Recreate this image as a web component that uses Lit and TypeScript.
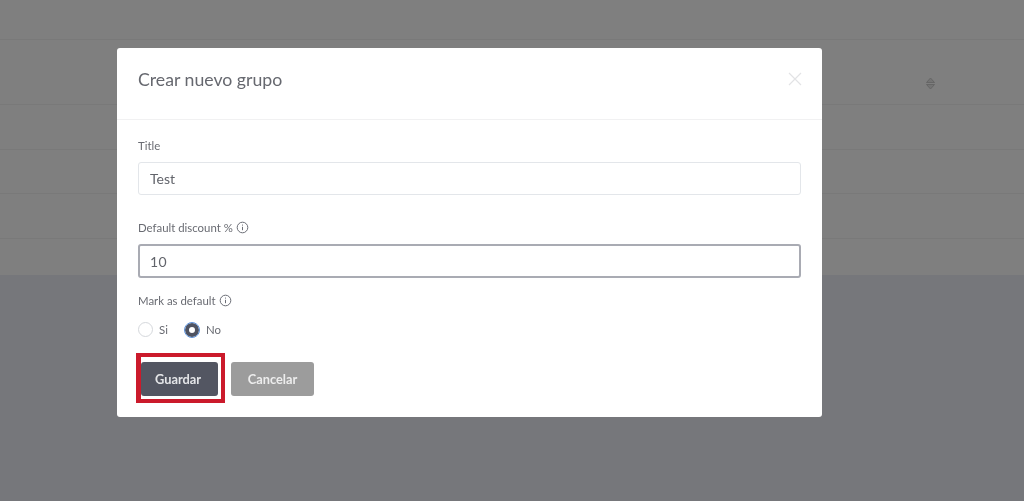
import { LitElement, html, css, svg } from "lit";
import { customElement } from "lit/decorators.js";

const info = svg`<svg class="info" width="13" height="13" viewBox="0 0 13 13" fill="none" stroke="#6b6e76" stroke-width="1"><circle cx="6.5" cy="6.5" r="5.3"/><path d="M6.5 5.8v3.4M6.5 3.6v1"/></svg>`;

@customElement("app-root")
export class AppRoot extends LitElement {
  static styles = css`
    :host { display: block; height: 501px; overflow: hidden; position: relative; background: #76777b; font-family: Lato, "Liberation Sans", sans-serif; filter: blur(.6px); }
    .table { background: #7f7f7f; height: 275px; display: flex; flex-direction: column; }
    .row { border-bottom: 1px solid #797979; box-sizing: border-box; display: flex; align-items: center; justify-content: flex-end; padding-right: 88px; }
    .table .row:last-child { border-bottom: 0; }
    .r0 { height: 40px; } .r1 { height: 65px; } .r2 { height: 45px; } .r3 { height: 44px; } .r4 { height: 45px; } .r5 { height: 36px; }
    .sort { margin-top: 22px; }
    .modal { position: absolute; left: 117px; top: 48px; width: 705px; height: 369px; background: #fff; border-radius: 3px; box-sizing: border-box; display: flex; flex-direction: column; }
    header { height: 72px; box-sizing: border-box; border-bottom: 1px solid #f1f1f2; padding: 20px 20px 0 21px; display: flex; justify-content: space-between; }
    h2 { margin: 0; font-size: 17.7px; line-height: 24px; font-weight: 400; color: #66686f; }
    .close { margin: 4px 0 0; }
    .body { padding: 18px 21px 0; display: flex; flex-direction: column; }
    label { display: flex; align-items: center; gap: 3px; font-size: 11.4px; line-height: 15px; color: #696b72; }
    .input { box-sizing: border-box; height: 33px; margin-top: 9px; border: 1px solid #e3e6ea; border-radius: 3px; padding: 0 11px; font-size: 14px; line-height: 32px; color: #62646b; }
    .input.focus { height: 34px; margin-top: 9px; border: 2px solid #a9abb3; line-height: 31px; padding: 0 10px; letter-spacing: .3px; }
    .mt1 { margin-top: 25px; }
    .mt2 { margin-top: 15px; }
    .radios { display: flex; align-items: center; margin-top: 14px; font-size: 11.4px; color: #696b72; height: 15px; }
    .radio { display: flex; align-items: center; gap: 6px; margin-right: 17px; }
    .radio + .radio { gap: 7px; }
    .dot { box-sizing: border-box; width: 15px; height: 15px; border-radius: 50%; border: 1px solid #d5d8dc; background: #fff; }
    .dot.on { border: 4px solid #4f5361; outline: 1px solid #5a8fd8; width: 14px; height: 14px; }
    .actions { display: flex; gap: 13px; margin: 25px 0 0 3px; position: relative; }
    button { height: 34px; box-sizing: border-box; border: 0; border-radius: 3px; font: 700 12.8px Lato, "Liberation Sans", sans-serif; padding: 0; }
    .save { width: 77px; background: #535662; color: #e4e5e8; padding-right: 3px; }
    .cancel { width: 83px; background: #9c9c9c; color: #ededed; }
    .mark { position: absolute; left: -5px; top: -9px; width: 89px; height: 50px; box-sizing: border-box; border: 4px solid #cb1a2b; border-left-width: 5px; pointer-events: none; }
  `;
  render() {
    return html`
      <div class="table">
        <div class="row r0"></div>
        <div class="row r1"><svg class="sort" width="11" height="13" viewBox="0 0 11 13" fill="#747474" stroke="#666" stroke-width="1"><path d="M5.5 1 9.5 5.5H1.5zM5.5 12 1.5 7.5h8z"/></svg></div>
        <div class="row r2"></div><div class="row r3"></div><div class="row r4"></div><div class="row r5"></div>
      </div>
      <div class="modal">
        <header>
          <h2>Crear nuevo grupo</h2>
          <svg class="close" width="14" height="14" viewBox="0 0 14 14" stroke="#e2e3e5" stroke-width="1.2" fill="none"><path d="M1 1l12 12M13 1 1 13"/></svg>
        </header>
        <div class="body">
          <label>Title</label>
          <div class="input">Test</div>
          <label class="mt1">Default discount % ${info}</label>
          <div class="input focus">10</div>
          <label class="mt2">Mark as default ${info}</label>
          <div class="radios">
            <div class="radio"><span class="dot"></span>Si</div>
            <div class="radio"><span class="dot on"></span>No</div>
          </div>
          <div class="actions">
            <button class="save">Guardar</button>
            <button class="cancel">Cancelar</button>
            <div class="mark"></div>
          </div>
        </div>
      </div>`;
  }
}
